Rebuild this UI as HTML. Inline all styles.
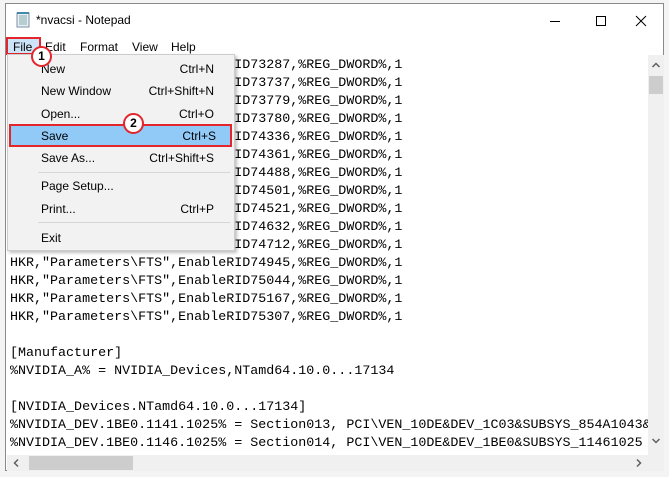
<!DOCTYPE html>
<html><head><meta charset="utf-8"><style>
*{margin:0;padding:0;box-sizing:border-box}
body{width:669px;height:477px;background:#f4f4f4;position:relative;overflow:hidden;font-family:"Liberation Sans",sans-serif}
#win{position:absolute;left:5px;top:3px;width:659px;height:468px;background:#fff;border:1px solid #8a8a8a}
.title{position:absolute;left:30px;top:9px;font-size:12px;color:#000}
.mb{position:absolute;top:36px;font-size:12px;color:#000}
#text{position:absolute;left:1px;top:52px;width:641px;height:399px;overflow:hidden;font-family:"Liberation Mono",monospace;font-size:13.35px;line-height:18px;white-space:pre;color:#000;padding-left:3px;padding-top:1px}
#vs{position:absolute;left:642px;top:51px;width:16px;height:400px;background:#f0f0f0}
#hs{position:absolute;left:1px;top:451px;width:641px;height:16px;background:#f0f0f0}
#menu{position:absolute;left:7px;top:54px;width:228px;height:197px;background:#f2f2f2;border:1px solid #ccc;box-shadow:2px 2px 3px rgba(0,0,0,.25);font-size:12px}
.mi{position:absolute;left:33px;color:#000}
.sc{position:absolute;right:20px;color:#000}
.sep{position:absolute;left:30px;right:4px;height:1px;background:#d7d7d7}
.badge{position:absolute;width:21px;height:21px;border-radius:50%;background:#fff;border:2px solid #e2262b;font-size:12px;font-weight:bold;text-align:center;line-height:17px}
</style></head><body>
<div id="win">
<svg style="position:absolute;left:9px;top:8px" width="16" height="16"><rect x="2" y="1" width="12" height="14" fill="#e8f0f6" stroke="#7a8fa6"/><path d="M4 4h8M4 6h8M4 8h8M4 10h8M4 12h8" stroke="#8aa"/><path d="M2 1h12" stroke="#48a" stroke-width="2"/></svg>
<div class="title">*nvacsi - Notepad</div>
<svg style="position:absolute;left:540px;top:10px" width="110" height="14"><path d="M4 7.5h10" stroke="#000"/><rect x="50.5" y="2.5" width="9" height="9" fill="none" stroke="#000"/><path d="M90 2l10 10M100 2l-10 10" stroke="#000"/></svg>
<div style="position:absolute;left:0;top:33px;width:35px;height:18px;background:#cce4f7;border:2px solid #e2262b"></div>
<div class="mb" style="left:7px">File</div>
<div class="mb" style="left:39px">Edit</div>
<div class="mb" style="left:74px">Format</div>
<div class="mb" style="left:126px">View</div>
<div class="mb" style="left:165px">Help</div>
<div id="text">HKR,"Parameters\FTS",EnableRID73287,%REG_DWORD%,1
HKR,"Parameters\FTS",EnableRID73737,%REG_DWORD%,1
HKR,"Parameters\FTS",EnableRID73779,%REG_DWORD%,1
HKR,"Parameters\FTS",EnableRID73780,%REG_DWORD%,1
HKR,"Parameters\FTS",EnableRID74336,%REG_DWORD%,1
HKR,"Parameters\FTS",EnableRID74361,%REG_DWORD%,1
HKR,"Parameters\FTS",EnableRID74488,%REG_DWORD%,1
HKR,"Parameters\FTS",EnableRID74501,%REG_DWORD%,1
HKR,"Parameters\FTS",EnableRID74521,%REG_DWORD%,1
HKR,"Parameters\FTS",EnableRID74632,%REG_DWORD%,1
HKR,"Parameters\FTS",EnableRID74712,%REG_DWORD%,1
HKR,"Parameters\FTS",EnableRID74945,%REG_DWORD%,1
HKR,"Parameters\FTS",EnableRID75044,%REG_DWORD%,1
HKR,"Parameters\FTS",EnableRID75167,%REG_DWORD%,1
HKR,"Parameters\FTS",EnableRID75307,%REG_DWORD%,1

[Manufacturer]
%NVIDIA_A% = NVIDIA_Devices,NTamd64.10.0...17134

[NVIDIA_Devices.NTamd64.10.0...17134]
%NVIDIA_DEV.1BE0.1141.1025% = Section013, PCI\VEN_10DE&amp;DEV_1C03&amp;SUBSYS_854A1043&amp;
%NVIDIA_DEV.1BE0.1146.1025% = Section014, PCI\VEN_10DE&amp;DEV_1BE0&amp;SUBSYS_11461025</div>
<div id="vs"><svg width="16" height="400"><path d="M4.5 12l3.5-3.5 3.5 3.5" fill="none" stroke="#606060" stroke-width="1.5"/><rect x="1" y="21" width="14" height="18" fill="#cdcdcd"/><path d="M4.5 384l3.5 3.5 3.5-3.5" fill="none" stroke="#606060" stroke-width="1.5"/></svg></div>
<div id="hs"><svg width="641" height="16"><path d="M11 4.5l-3.5 3.5 3.5 3.5" fill="none" stroke="#606060" stroke-width="1.5"/><rect x="22" y="1" width="104" height="14" fill="#cdcdcd"/><path d="M630 4.5l3.5 3.5-3.5 3.5" fill="none" stroke="#606060" stroke-width="1.5"/></svg></div>
<div style="position:absolute;left:642px;top:451px;width:16px;height:16px;background:#f0f0f0"></div>
</div>
<div id="menu">
<div class="mi" style="top:7px">New</div><div class="sc" style="top:7px">Ctrl+N</div>
<div class="mi" style="top:29px">New Window</div><div class="sc" style="top:29px">Ctrl+Shift+N</div>
<div class="mi" style="top:52px">Open...</div><div class="sc" style="top:52px">Ctrl+O</div>
<div style="position:absolute;left:1px;top:69px;width:223px;height:23px;background:#91c9f7;border:2px solid #e2262b"></div>
<div class="mi" style="top:74px">Save</div><div class="sc" style="top:74px;right:18px">Ctrl+S</div>
<div class="mi" style="top:96px">Save As...</div><div class="sc" style="top:96px">Ctrl+Shift+S</div>
<div class="sep" style="top:117px"></div>
<div class="mi" style="top:124px">Page Setup...</div>
<div class="mi" style="top:147px">Print...</div><div class="sc" style="top:147px">Ctrl+P</div>
<div class="sep" style="top:167px"></div>
<div class="mi" style="top:176px">Exit</div>
</div>
<div class="badge" style="left:31px;top:46px">1</div>
<div class="badge" style="left:123px;top:113px">2</div>
</body></html>
